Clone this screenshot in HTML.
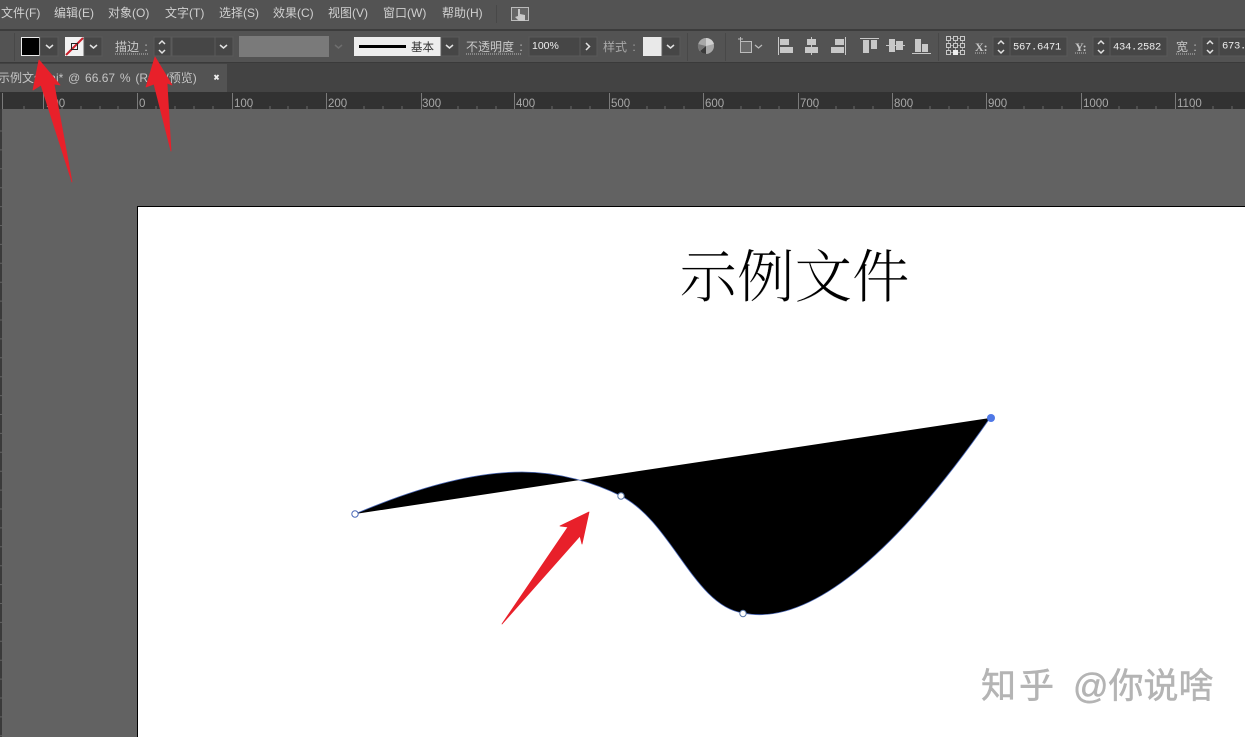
<!DOCTYPE html>
<html lang="zh"><head><meta charset="utf-8"><title>示例文件</title>
<style>
html,body{margin:0;padding:0;background:#626262;width:1245px;height:737px;overflow:hidden}
svg{display:block;position:absolute;left:0;top:0}
text{font-family:"Liberation Sans","Noto Sans CJK SC",sans-serif}
.m{fill:#d0d0d0;font-size:12px}
.l{fill:#c8c8c8;font-size:12px;word-spacing:2px}
.r{fill:#a8a8a8;font-size:11.500px}
.v{fill:#eeeeee;font-size:10.500px;letter-spacing:-.3px;font-family:"Liberation Mono","Noto Sans CJK SC",monospace}
.box{fill:#464646;stroke:#5a5a5a;stroke-width:1}
.chev{fill:none;stroke:#e2e2e2;stroke-width:1.500}
.ic{fill:#c8c8c8}
</style></head><body>
<svg width="1245" height="737" viewBox="0 0 1245 737" xmlns="http://www.w3.org/2000/svg">
<!-- chrome -->
<rect width="1245" height="29" fill="#535353"/>
<rect y="29" width="1245" height="2" fill="#3c3c3c"/>
<rect y="31" width="1245" height="32" fill="#535353"/>
<rect y="62" width="1245" height="1" fill="#3a3a3a"/>
<rect y="63" width="1245" height="30" fill="#434343"/>
<rect y="64" width="227" height="28" fill="#535353"/>
<rect y="92" width="1245" height="17" fill="#323232"/>
<rect y="109" width="1245" height="628" fill="#626262"/>
<rect y="109" width="2" height="628" fill="#3a3a3a"/>
<path d="M1 130.500V737" stroke="#8a8a8a" stroke-dasharray="1 17.900"/>
<!-- menu -->
<text class="m" x="1" y="17">文件(F)</text>
<text class="m" x="54" y="17">编辑(E)</text>
<text class="m" x="108" y="17">对象(O)</text>
<text class="m" x="165" y="17">文字(T)</text>
<text class="m" x="219" y="17">选择(S)</text>
<text class="m" x="273" y="17">效果(C)</text>
<text class="m" x="328" y="17">视图(V)</text>
<text class="m" x="383" y="17">窗口(W)</text>
<text class="m" x="442" y="17">帮助(H)</text>
<rect x="496" y="5" width="1" height="18" fill="#484848"/>
<rect x="511.500" y="7.500" width="17" height="13" fill="#666" stroke="#bbb"/>
<path d="M518 9h2v5l5 1v6h-6l-4-4 3-1z" fill="#c8c8c8"/>
<!-- toolbar fill/stroke -->
<rect x="14" y="33" width="1" height="28" fill="#484848"/>
<rect x="21.500" y="37.500" width="18" height="18" fill="#000" stroke="#eee"/>
<rect x="40" y="37" width="18" height="19" class="box"/>
<path d="M46 45l3.500 3 3.500-3" class="chev"/>
<rect x="65" y="37" width="19" height="19" fill="#f2f2f2"/>
<path d="M66 55L83 38" stroke="#c8202c" stroke-width="2"/>
<rect x="71.500" y="43.500" width="6" height="6" fill="none" stroke="#222"/>
<rect x="84" y="37" width="18" height="19" class="box"/>
<path d="M90 45l3.500 3 3.500-3" class="chev"/>
<text class="l" x="115" y="51">描边 :</text>
<path d="M115 54h33" stroke="#bbb" stroke-dasharray="1 1"/>
<rect x="154" y="37" width="17" height="19" class="box"/>
<path d="M159 44l3-3 3 3M159 50l3 3 3-3" class="chev"/>
<rect x="172" y="37" width="43" height="19" class="box"/>
<rect x="215" y="37" width="18" height="19" class="box"/>
<path d="M220 45l3.500 3 3.500-3" class="chev"/>
<rect x="239" y="36" width="90" height="21" fill="#7a7a7a"/>
<path d="M335 45l3.500 3 3.500-3" fill="none" stroke="#6e6e6e" stroke-width="1.500"/>
<rect x="354" y="37" width="87" height="19" fill="#ededed"/>
<rect x="359" y="45" width="47" height="3" fill="#000"/>
<text x="411" y="51" font-size="11.500" fill="#333">基本</text>
<rect x="441" y="37" width="18" height="19" class="box"/>
<path d="M446 45l3.500 3 3.500-3" class="chev"/>
<text class="l" x="466" y="51">不透明度 :</text>
<path d="M466 54h56" stroke="#bbb" stroke-dasharray="1 1"/>
<rect x="529" y="37" width="51" height="19" class="box"/>
<text x="532" y="49" font-size="10.500" fill="#efefef">100%</text>
<rect x="580" y="37" width="17" height="19" class="box"/>
<path d="M586 43l3.500 3.500-3.500 3.500" class="chev"/>
<text class="l" x="603" y="51" style="fill:#a8a8a8">样式 :</text>
<rect x="643" y="37" width="19" height="19" fill="#e9e9e9"/>
<rect x="662" y="37" width="18" height="19" class="box"/>
<path d="M667 45l3.500 3 3.500-3" class="chev"/>
<rect x="687" y="33" width="1" height="28" fill="#484848"/>
<circle cx="706" cy="46" r="8" fill="#a8a8a8"/>
<path d="M706 46L700 51A8 8 0 0 0 706 54Z" fill="#3a3a3a"/>
<path d="M706 46L714 44A8 8 0 0 0 706 38Z" fill="#d0d0d0"/>
<path d="M706 46L698 44A8 8 0 0 0 700 51Z" fill="#777"/>
<rect x="725" y="33" width="1" height="28" fill="#484848"/>
<rect x="740.500" y="41.500" width="11" height="11" fill="#6a6a6a" stroke="#bcbcbc"/>
<path d="M738 39h5M740.500 37v5" stroke="#bbb"/>
<path d="M755 45l3.500 3 3.500-3" fill="none" stroke="#bbb" stroke-width="1.200"/>
<!-- align -->
<rect x="778" y="37" width="1" height="18" class="ic"/><rect x="780" y="39" width="9" height="6" class="ic"/><rect x="780" y="47" width="13" height="6" class="ic"/>
<rect x="811" y="37" width="1" height="18" class="ic"/><rect x="807" y="39" width="9" height="6" class="ic"/><rect x="805" y="47" width="13" height="6" class="ic"/>
<rect x="845" y="37" width="1" height="18" class="ic"/><rect x="835" y="39" width="9" height="6" class="ic"/><rect x="831" y="47" width="13" height="6" class="ic"/>
<rect x="860" y="38" width="19" height="1" class="ic"/><rect x="863" y="40" width="6" height="13" class="ic"/><rect x="871" y="40" width="6" height="9" class="ic"/>
<rect x="886" y="45" width="19" height="1" class="ic"/><rect x="889" y="39" width="6" height="13" class="ic"/><rect x="896" y="41" width="7" height="9" class="ic"/>
<rect x="912" y="53" width="19" height="1" class="ic"/><rect x="915" y="39" width="6" height="13" class="ic"/><rect x="922" y="44" width="6" height="8" class="ic"/>
<rect x="938" y="33" width="1" height="28" fill="#484848"/>
<!-- reference point grid -->
<path d="M950 38.500h4M957 38.500h4M950 45.500h4M957 45.500h4M950 52.500h4M957 52.500h4M948.500 40v4M948.500 47v4M955.500 40v4M955.500 47v4M962.500 40v4M962.500 47v4" stroke="#a0a0a0"/>
<g fill="none" stroke="#c8c8c8">
<rect x="946.500" y="36.500" width="4" height="4"/><rect x="953.500" y="36.500" width="4" height="4"/><rect x="960.500" y="36.500" width="4" height="4"/>
<rect x="946.500" y="43.500" width="4" height="4"/><rect x="953.500" y="43.500" width="4" height="4"/><rect x="960.500" y="43.500" width="4" height="4"/>
<rect x="946.500" y="50.500" width="4" height="4"/><rect x="960.500" y="50.500" width="4" height="4"/>
</g>
<rect x="953" y="50" width="5" height="5" fill="#eee"/>
<!-- X Y W -->
<text class="l" x="975" y="51" style="font-family:'Liberation Serif',serif;font-weight:bold">X:</text>
<path d="M975 53h11" stroke="#bbb" stroke-dasharray="1 1"/>
<rect x="993" y="37" width="17" height="19" class="box"/>
<path d="M998 44l3-3 3 3M998 50l3 3 3-3" class="chev"/>
<rect x="1010" y="37" width="57" height="19" class="box"/>
<text class="v" x="1013" y="49.500">567.6471</text>
<text class="l" x="1075" y="51" style="font-family:'Liberation Serif',serif;font-weight:bold">Y:</text>
<path d="M1075 53h11" stroke="#bbb" stroke-dasharray="1 1"/>
<rect x="1093" y="37" width="17" height="19" class="box"/>
<path d="M1098 44l3-3 3 3M1098 50l3 3 3-3" class="chev"/>
<rect x="1110" y="37" width="57" height="19" class="box"/>
<text class="v" x="1113" y="49.500">434.2582</text>
<text class="l" x="1176" y="51">宽 :</text>
<path d="M1176 54h19" stroke="#bbb" stroke-dasharray="1 1"/>
<rect x="1202" y="37" width="17" height="19" class="box"/>
<path d="M1207 44l3-3 3 3M1207 50l3 3 3-3" class="chev"/>
<rect x="1219" y="37" width="30" height="19" class="box"/>
<text class="v" x="1222" y="48.500">673.</text>
<!-- tab -->
<text x="-2" y="82" font-size="12" fill="#c4c4c4">示例文件.ai*</text>
<text x="68" y="82" font-size="12" fill="#c4c4c4" word-spacing="1.500">@ 66.67 % (RGB/预览)</text>
<path d="M214.500 75l4 4.500M218.500 75l-4 4.500" stroke="#eee" stroke-width="1.800"/>
<!-- ruler -->
<g fill="#7a7a7a">
<rect x="2" y="93" width="1" height="16"/><rect x="43" y="93" width="1" height="16"/><rect x="137" y="93" width="1" height="16"/><rect x="232" y="93" width="1" height="16"/><rect x="326" y="93" width="1" height="16"/><rect x="421" y="93" width="1" height="16"/><rect x="514" y="93" width="1" height="16"/><rect x="609" y="93" width="1" height="16"/><rect x="703" y="93" width="1" height="16"/><rect x="798" y="93" width="1" height="16"/><rect x="892" y="93" width="1" height="16"/><rect x="986" y="93" width="1" height="16"/><rect x="1081" y="93" width="1" height="16"/><rect x="1175" y="93" width="1" height="16"/>
</g>
<path d="M24 106v3M62 106v3M81 106v3M100 106v3M118 106v3M156 106v3M175 106v3M194 106v3M213 106v3M251 106v3M270 106v3M288 106v3M307 106v3M345 106v3M364 106v3M383 106v3M402 106v3M439 106v3M458 106v3M477 106v3M496 106v3M533 106v3M552 106v3M571 106v3M590 106v3M628 106v3M647 106v3M665 106v3M684 106v3M722 106v3M741 106v3M760 106v3M779 106v3M817 106v3M836 106v3M854 106v3M873 106v3M911 106v3M930 106v3M949 106v3M968 106v3M1005 106v3M1024 106v3M1043 106v3M1062 106v3M1100 106v3M1119 106v3M1137 106v3M1156 106v3M1194 106v3M1213 106v3M1232 106v3" stroke="#6a6a6a"/>
<text class="r" x="46" y="107">100</text>
<text class="r" x="139" y="107">0</text>
<text class="r" x="234" y="107">100</text>
<text class="r" x="328" y="107">200</text>
<text class="r" x="422" y="107">300</text>
<text class="r" x="516" y="107">400</text>
<text class="r" x="611" y="107">500</text>
<text class="r" x="705" y="107">600</text>
<text class="r" x="800" y="107">700</text>
<text class="r" x="894" y="107">800</text>
<text class="r" x="988" y="107">900</text>
<text class="r" x="1083" y="107">1000</text>
<text class="r" x="1177" y="107">1100</text>
<!-- artboard -->
<rect x="137.500" y="206.500" width="1110" height="540" fill="#fff" stroke="#000"/>
<text x="679.500" y="297" font-size="57.500" fill="#000" stroke="#fff" stroke-width="0.200" style="font-family:'Noto Serif CJK SC',serif;font-weight:300">示例文件</text>
<!-- shape -->
<path d="M355 514C425 484 480 472 522 472C560 472 595 483 621 496C672 522 694 606 743 613C815 628 905 540 990 418Z" fill="#000"/>
<path d="M355 514C425 484 480 472 522 472C560 472 595 483 621 496C672 522 694 606 743 613C815 628 905 540 990 418" fill="none" stroke="#4a68b8" stroke-width="0.800"/>
<circle cx="355" cy="514" r="3.200" fill="#fff" stroke="#4a68b8"/>
<circle cx="621" cy="496" r="3.200" fill="#fff" stroke="#5a78a8"/>
<circle cx="743" cy="613.500" r="3.200" fill="#fff" stroke="#5a78a8"/>
<circle cx="991" cy="418" r="4" fill="#4f78e6"/>
<!-- watermark -->
<text x="981" y="698" font-size="35" fill="#b4b4b4" stroke="#b4b4b4" stroke-width="0.500" letter-spacing="3">知乎</text>
<text x="1073" y="698" font-size="35" fill="#b4b4b4" stroke="#b4b4b4" stroke-width="0.500">@你说啥</text>
<!-- arrows -->
<g fill="#e8202a" stroke="#e8202a" stroke-width="0.800" stroke-linejoin="round">
<path d="M39 60L33 90L41 85L72 182L54 84L60 85Z"/>
<path d="M155 57L146 87L154 84L171 151L167 83L172 85Z"/>
<path d="M589 512L560 526L568 527L502 624L580 536L582 544Z"/>
</g>
</svg>
</body></html>
